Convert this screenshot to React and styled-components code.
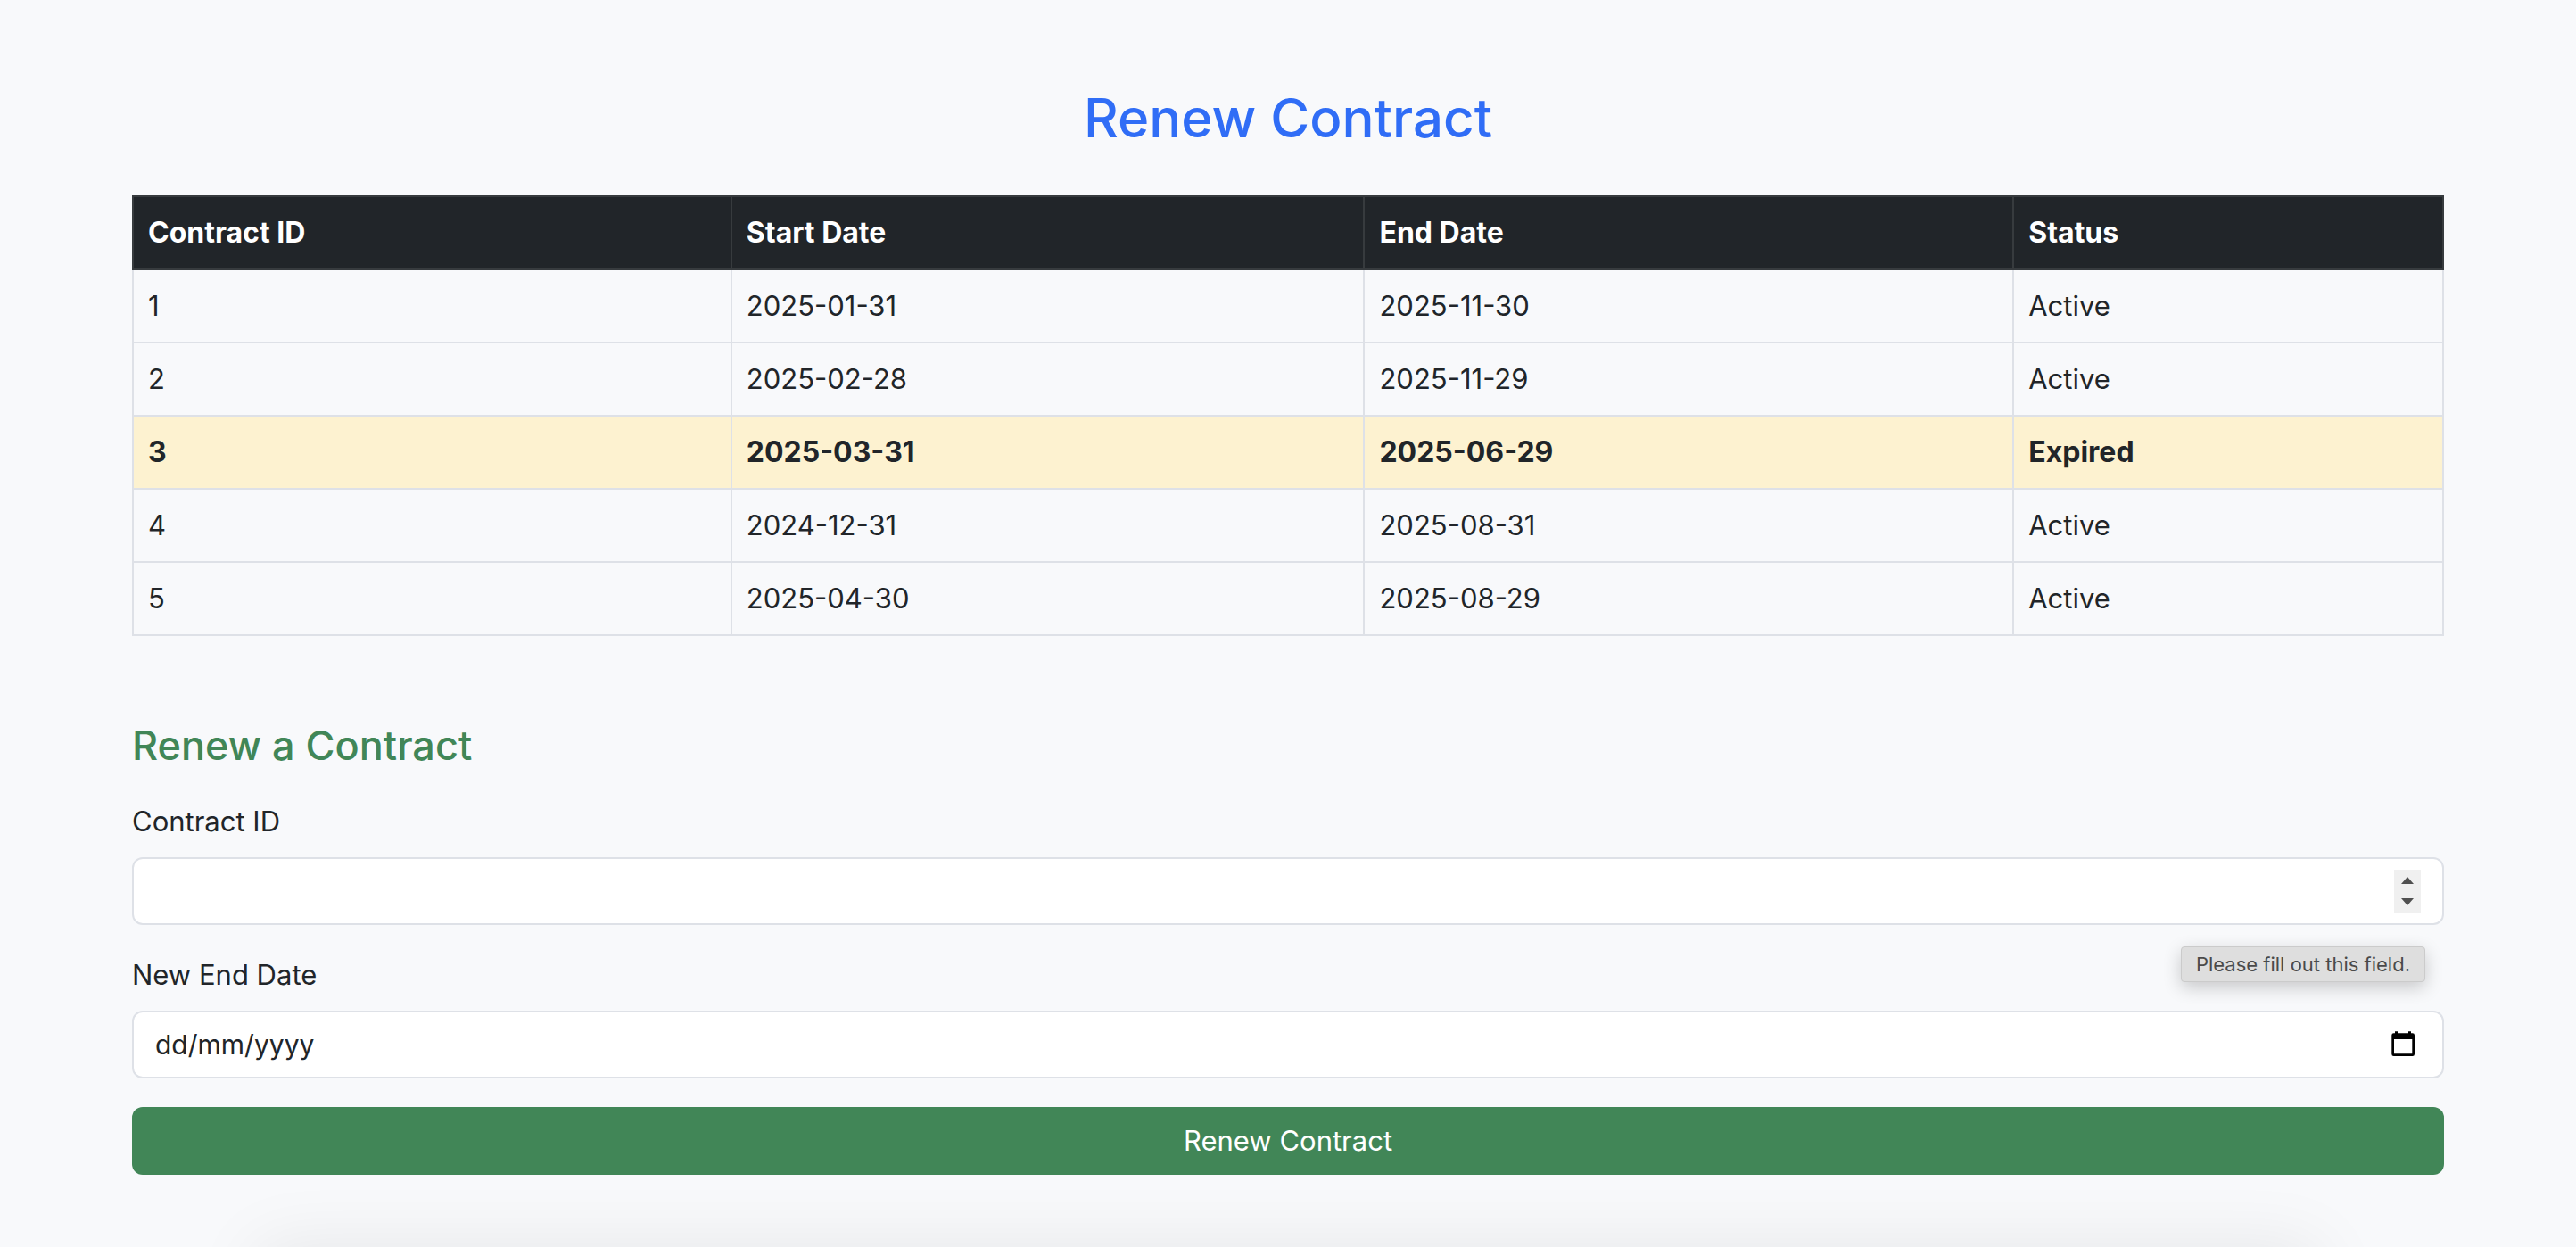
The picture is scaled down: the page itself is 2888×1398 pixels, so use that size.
import React, { useState } from "react";
import styled, { createGlobalStyle } from "styled-components";

const GlobalStyle = createGlobalStyle`
  *, *::before, *::after { box-sizing: border-box; }
  body {
    margin: 0;
    background: #f8f9fb;
    color: #212529;
    font-family: Inter, "Liberation Sans", sans-serif;
    font-size: 31px;
    line-height: 48px;
  }
`;

const Page = styled.div`
  min-height: 100vh;
  padding: 94px 24px 48px;
`;

const Container = styled.main`
  max-width: 2592px;
  margin: 0 auto;
`;

const Title = styled.h1`
  margin: 0 0 48px;
  color: #306df6;
  font-size: 60px;
  font-weight: 500;
  line-height: 77px;
  text-align: center;
`;

const Table = styled.table`
  width: 100%;
  table-layout: fixed;
  border-collapse: collapse;
`;

const Column = styled.col`
  width: ${({ $share }) => $share};
`;

const HeadCell = styled.th`
  padding: 16px;
  border: 2px solid #373b3e;
  background: #212529;
  color: #fff;
  font-size: 32px;
  font-weight: 700;
  text-align: left;
`;

const Row = styled.tr`
  background: ${({ $expired }) => ($expired ? "#fdf2d0" : "transparent")};
  font-size: ${({ $expired }) => ($expired ? "32px" : "31px")};
  font-weight: ${({ $expired }) => ($expired ? 700 : 400)};
`;

const Cell = styled.td`
  padding: 16px;
  border: 2px solid #dee1e7;
`;

const FormTitle = styled.h2`
  margin: 94px 0 32px;
  color: #418657;
  font-size: 45px;
  font-weight: 500;
  line-height: 58px;
`;

const Field = styled.div`
  position: relative;
  display: flex;
  flex-direction: column;
  gap: 16px;
  margin-bottom: 32px;
`;

const Control = styled.div`
  display: flex;
  align-items: center;
  padding: 12px 24px;
  border: 2px solid #dee1e7;
  border-radius: 12px;
  background: #fff;
`;

const Input = styled.input`
  flex: 1;
  min-width: 0;
  height: 48px;
  padding: 0;
  border: 0;
  outline: 0;
  background: transparent;
  color: inherit;
  font: inherit;
  font-size: 30px;
  appearance: textfield;

  &::placeholder { color: #212529; opacity: 1; }
  &::-webkit-inner-spin-button { appearance: none; margin: 0; }
`;

const Spinner = styled.div`
  display: flex;
  flex-direction: column;
  width: 30px;
`;

const StepButton = styled.button`
  display: block;
  height: 24px;
  padding: 0;
  border: 0;
  background: #f0f0f0;
  color: #505050;
`;

const StepIcon = styled.svg`
  display: block;
  width: 30px;
  height: 24px;
`;

const PickerButton = styled.button`
  height: 32px;
  margin-right: 4px;
  padding: 0;
  border: 0;
  background: transparent;
  color: #000;
`;

const CalendarIcon = styled.svg`
  display: block;
  width: 32px;
  height: 32px;
`;

const Tooltip = styled.div`
  position: absolute;
  z-index: 1;
  top: calc(100% + 24px);
  right: 21px;
  padding: 5px 16px;
  border: 1px solid #cbcbcb;
  border-radius: 4px;
  background: #dedede;
  box-shadow: 0 6px 20px rgba(0, 0, 0, 0.2);
  color: #4a4a4a;
  font-size: 22px;
  line-height: 28px;
`;

const SubmitButton = styled.button`
  display: block;
  width: 100%;
  padding: 14px 24px;
  border: 0;
  border-radius: 12px;
  background: #418657;
  color: #fff;
  font: inherit;
`;

const BottomShade = styled.div`
  position: fixed;
  top: 100%;
  right: 10%;
  left: 10%;
  height: 120px;
  box-shadow: 0 0 80px rgba(0, 0, 0, 0.08);
`;

const columns = [
  { label: "Contract ID", share: "25.9%" },
  { label: "Start Date", share: "27.4%" },
  { label: "End Date", share: "28.1%" },
  { label: "Status", share: "18.6%" },
];

const contracts = [
  { id: 1, start: "2025-01-31", end: "2025-11-30", status: "Active" },
  { id: 2, start: "2025-02-28", end: "2025-11-29", status: "Active" },
  { id: 3, start: "2025-03-31", end: "2025-06-29", status: "Expired" },
  { id: 4, start: "2024-12-31", end: "2025-08-31", status: "Active" },
  { id: 5, start: "2025-04-30", end: "2025-08-29", status: "Active" },
];

export default function App() {
  const [contractId, setContractId] = useState("");
  const [endDate, setEndDate] = useState("");
  const step = (amount) => setContractId((value) => String(Number(value) + amount));

  return (
    <Page>
      <GlobalStyle />
      <Container>
        <Title>Renew Contract</Title>
        <Table>
          <colgroup>
            {columns.map((c) => (
              <Column key={c.label} $share={c.share} />
            ))}
          </colgroup>
          <thead>
            <tr>
              {columns.map((c) => (
                <HeadCell key={c.label} scope="col">{c.label}</HeadCell>
              ))}
            </tr>
          </thead>
          <tbody>
            {contracts.map((c) => (
              <Row key={c.id} $expired={c.status === "Expired"}>
                <Cell>{c.id}</Cell>
                <Cell>{c.start}</Cell>
                <Cell>{c.end}</Cell>
                <Cell>{c.status}</Cell>
              </Row>
            ))}
          </tbody>
        </Table>

        <FormTitle>Renew a Contract</FormTitle>
        <form onSubmit={(e) => e.preventDefault()}>
          <Field>
            <label htmlFor="contract-id">Contract ID</label>
            <Control>
              <Input
                id="contract-id"
                type="number"
                required
                value={contractId}
                onChange={(e) => setContractId(e.target.value)}
              />
              <Spinner>
                <StepButton type="button" aria-label="Increase" onClick={() => step(1)}>
                  <StepIcon viewBox="0 0 30 24" fill="currentColor">
                    <path d="M15 8l7 8H8z" />
                  </StepIcon>
                </StepButton>
                <StepButton type="button" aria-label="Decrease" onClick={() => step(-1)}>
                  <StepIcon viewBox="0 0 30 24" fill="currentColor">
                    <path d="M8 8h14l-7 8z" />
                  </StepIcon>
                </StepButton>
              </Spinner>
            </Control>
            <Tooltip role="tooltip">Please fill out this field.</Tooltip>
          </Field>
          <Field>
            <label htmlFor="end-date">New End Date</label>
            <Control>
              <Input
                id="end-date"
                type="text"
                placeholder="dd/mm/yyyy"
                required
                value={endDate}
                onChange={(e) => setEndDate(e.target.value)}
              />
              <PickerButton type="button" aria-label="Show date picker">
                <CalendarIcon viewBox="0 0 32 32" fill="currentColor" fillRule="evenodd">
                  <path d="M7 1.3h3v2h12v-2h3v2h1.7a2.3 2.3 0 0 1 2.3 2.3v21.1a2.3 2.3 0 0 1-2.3 2.3H5.6a2.3 2.3 0 0 1-2.3-2.3V5.6a2.3 2.3 0 0 1 2.3-2.3H7zM6 10v16.3h20.3V10z" />
                </CalendarIcon>
              </PickerButton>
            </Control>
          </Field>
          <SubmitButton type="submit">Renew Contract</SubmitButton>
        </form>
      </Container>
      <BottomShade />
    </Page>
  );
}
